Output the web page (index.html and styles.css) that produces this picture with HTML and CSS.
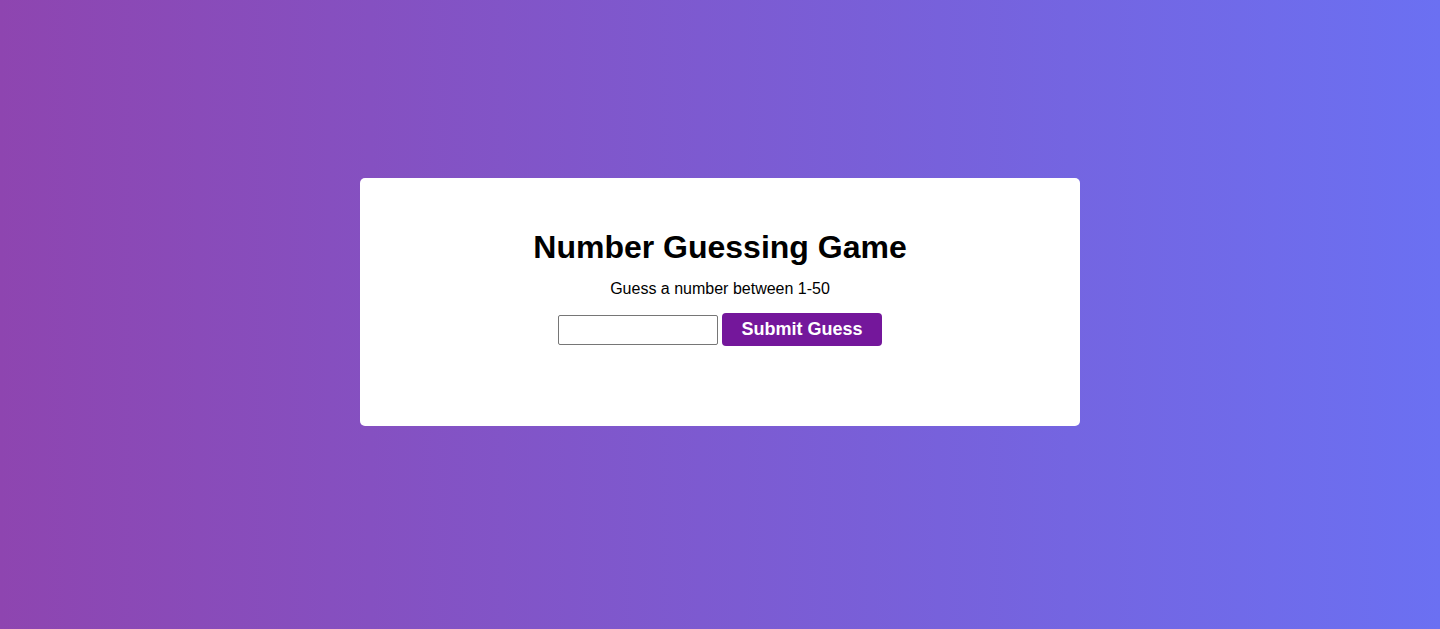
FILE: index.html
```html
<!DOCTYPE html>
<html lang="en">
<head>
<meta charset="utf-8">
<title>Number Guessing Game</title>
<link rel="stylesheet" href="styles.css">
</head>
<body>
<main class="page">
  <section class="card">
    <h1 class="title">Number Guessing Game</h1>
    <p class="subtitle">Guess a number between 1-50</p>
    <form class="guess-row" onsubmit="return false;">
      <input class="guess-input" type="number" aria-label="Your guess">
      <button class="guess-btn" type="submit">Submit Guess</button>
    </form>
  </section>
</main>
</body>
</html>
```

FILE: styles.css
```css
* { box-sizing: border-box; }
html, body { margin: 0; padding: 0; }
body {
  font-family: "Liberation Sans", Arial, Helvetica, sans-serif;
  background: linear-gradient(to right, #8e45b0, #6b70f2);
  min-height: 100vh;
}
.page {
  min-height: 100vh;
  display: flex;
  align-items: center;
  justify-content: center;
  padding-bottom: 25px;
}
.card {
  width: 720px;
  background: #fff;
  border-radius: 5px;
  padding: 30px 20px 80px;
  text-align: center;
}
.title {
  font-size: 32px;
  font-weight: bold;
  margin: 21px 0 14px;
  color: #000;
}
.subtitle {
  font-size: 16px;
  margin: 0 0 15px;
  color: #000;
}
.guess-row {
  display: flex;
  justify-content: center;
  align-items: center;
  gap: 4px;
}
.guess-input {
  width: 160px;
  height: 30px;
  border: 1px solid #767676;
  border-radius: 2px;
  font-size: 16px;
  padding: 2px 4px;
  margin-top: 1px;
}
.guess-btn {
  width: 160px;
  height: 33px;
  background: #74179b;
  color: #fff;
  border: none;
  border-radius: 4px;
  font-family: "Liberation Sans", Arial, Helvetica, sans-serif;
  font-size: 18px;
  font-weight: bold;
  cursor: pointer;
}
```
